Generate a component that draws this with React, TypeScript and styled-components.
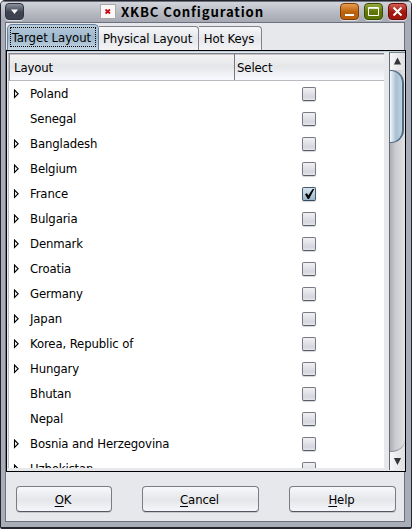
import React, { useState } from "react";
import styled, { createGlobalStyle, css } from "styled-components";

const GlobalStyle = createGlobalStyle`
  * { box-sizing: border-box; }
  body { margin: 0; overflow: hidden; background: #fff; }
  button { font: inherit; color: inherit; letter-spacing: inherit; }
`;

const Window = styled.div`
  width: 412px;
  height: 529px;
  display: flex;
  flex-direction: column;
  overflow: hidden;
  background: #a9adb8;
  border: 1px solid #24242e;
  border-width: 1px 1px 2px 1px;
  border-radius: 5px 5px 2px 2px;
  font: 13px/16px "DejaVu Sans Condensed", "DejaVu Sans", sans-serif;
  font-stretch: condensed;
  letter-spacing: -0.12px;
  color: #000;
`;

const TitleBar = styled.header`
  height: 21px;
  flex: none;
  display: flex;
  align-items: center;
  padding: 0 4px;
  background: linear-gradient(#d4d7de, #b7bac2 55%, #a5a8b2);
  box-shadow: inset 0 1px #6d6f79;
`;

const tones = {
  slate: ["#8b909c", "#3c424f", "#303540"],
  orange: ["#e89c51", "#bb610b", "#7d3f08"],
  green: ["#98aa40", "#5d7504", "#3d4d05"],
  red: ["#cf6055", "#a1160d", "#720b07"],
};

const TitleButton = styled.button<{ $tone: keyof typeof tones }>`
  width: 19px;
  height: 17px;
  margin-right: 5px;
  padding: 0;
  flex: none;
  border: 1px solid ${(p) => tones[p.$tone][2]};
  border-radius: 4px;
  background: linear-gradient(${(p) => tones[p.$tone][0]}, ${(p) => tones[p.$tone][1]} 55%);
  box-shadow: 0 1px #dadce2;
  svg { display: block; }
  &:last-child { margin-right: 0; }
`;

const AppIcon = styled.svg`
  flex: none;
  margin-left: 71px;
`;

const Title = styled.h1`
  flex: 1;
  margin: 0 0 0 5px;
  font: 700 13.2px/18px "Noto Sans CJK JP", sans-serif;
  letter-spacing: 0.85px;
  white-space: nowrap;
`;

const Body = styled.main`
  flex: 1;
  min-height: 0;
  margin: 0 6px 5px 4px;
  display: flex;
  flex-direction: column;
  background: #e7e8ec;
  border: 1px solid #6d717d;
`;

const TabList = styled.nav`
  width: 400px;
  height: 28px;
  flex: none;
  display: flex;
  align-items: flex-end;
  padding-left: 1px;
  border-bottom: 1px solid #000;
`;

const Tab = styled.button<{ $active: boolean; $width: number }>`
  width: ${(p) => p.$width}px;
  height: 24px;
  padding: 0 2px 0 0;
  border: 1px solid #80838b;
  border-left-width: 0;
  border-bottom: 0;
  border-radius: 0 4px 0 0;
  background: linear-gradient(#f6f7f9, #e6e7eb 50%, #f4f4f6);
  white-space: nowrap;
  text-align: center;
  ${(p) =>
    p.$active &&
    css`
      height: 26px;
      padding: 2px 2px 3px 2px;
      letter-spacing: 0;
      border-left-width: 1px;
      border-color: #69809a;
      border-radius: 5px 5px 0 0;
      background: linear-gradient(#b9cddd, #9cb6ca 50%, #c3d7e6);
    `}
`;

const TabLabel = styled.span<{ $focused: boolean }>`
  display: block;
  height: 20px;
  padding-right: ${(p) => (p.$focused ? 3 : 0)}px;
  line-height: ${(p) => (p.$focused ? 20 : 18)}px;
  border: 1px dotted ${(p) => (p.$focused ? "#000" : "transparent")};
`;

const Panel = styled.section`
  width: 400px;
  height: 421px;
  flex: none;
  display: flex;
  border: 1px solid #000;
  border-top: 0;
  background: #e7e8ec;
  padding: 1px 0 1px 1px;
  box-shadow: inset 0 1px #b9cedd;
`;

const Table = styled.div`
  width: 376px;
  height: 415px;
  margin-top: 1px;
  border-top: 1px solid #83828c;
  border-left: 1px solid #b7bac9;
  overflow: hidden;
  background: #fff;
`;

const HeaderRow = styled.div`
  height: 27px;
  display: flex;
  border-bottom: 1px solid #b9bac0;
  border-left: 1px solid #8d8e96;
  background: linear-gradient(#f4f4f5, #e5e6e8 48%, #f9faff);
  box-shadow: inset 0 1px #c3c4ca;
`;

const HeaderCell = styled.div<{ $width?: number }>`
  width: ${(p) => (p.$width ? `${p.$width}px` : "auto")};
  padding: 6px 0 0 ${(p) => (p.$width ? 4 : 2)}px;
  border-right: ${(p) => (p.$width ? "1px solid #777982" : "0")};
`;

const Row = styled.div`
  height: 25px;
  display: flex;
  align-items: center;
`;

const Expander = styled.svg`
  flex: none;
  margin: 0 9px 0 4px;
`;

const RowName = styled.span`
  width: 272px;
  flex: none;
  white-space: nowrap;
`;

const Check = styled.button<{ $on: boolean }>`
  width: 14px;
  height: 14px;
  margin: 1px 0 0;
  padding: 0;
  flex: none;
  border: 1px solid ${(p) => (p.$on ? "#44596d" : "#777984")};
  border-bottom-color: ${(p) => (p.$on ? "#374b60" : "#595d66")};
  border-radius: 2px;
  background: ${(p) => (p.$on ? "linear-gradient(#d5e3ee, #9db6c9)" : "linear-gradient(#f1f1f3, #d5d6de 75%, #e6e7ec)")};
  box-shadow: 0 1px 1px #d3d4da;
  svg { display: block; overflow: visible; }
`;

const ScrollBar = styled.div`
  width: 16px;
  height: 418px;
  margin-left: auto;
  display: flex;
  flex-direction: column;
  border-left: 1px solid #656871;
  background: linear-gradient(90deg, #f6f6f8, #dedfe4);
`;

const ScrollArrow = styled.button<{ $edge?: boolean }>`
  height: 18px;
  flex: none;
  padding: 0;
  border: 0;
  border-top: ${(p) => (p.$edge ? "1px solid #83868f" : "0")};
  background: transparent;
  svg { display: block; }
`;

const ScrollTrack = styled.div`
  flex: 1;
  border-bottom: 1px solid #85878f;
  border-radius: 0 0 14px 0 / 0 0 12px 0;
  background: linear-gradient(90deg, #aaadb3, #c9cbd0 35%, #e0e1e4);
`;

const ScrollThumb = styled.div`
  width: 14px;
  height: 73px;
  border: 1px solid #526b82;
  border-left: 0;
  border-right-width: 2px;
  border-radius: 0 13px 13px 0;
  background: linear-gradient(90deg, #f2f8fc, #a9c0d2 50%, #bed3e2);
`;

const Footer = styled.footer`
  display: flex;
  gap: 30px;
  padding: 14px 0 0 10px;
`;

const PushButton = styled.button<{ $width: number }>`
  width: ${(p) => p.$width}px;
  height: 26px;
  flex: none;
  padding: 0 2px 0 0;
  border: 1px solid #797c84;
  border-bottom-color: #53565e;
  border-radius: 4px;
  background: linear-gradient(#f7f8fa, #e5e6ea 55%, #f5f6fa);
  box-shadow: 0 1px #c6c8ce;
  line-height: 25px;
`;

const Mnemonic = styled.span`
  text-decoration: underline;
  text-underline-offset: 2px;
  text-decoration-thickness: 1px;
`;

const tabs = [
  { label: "Target Layout", width: 92 },
  { label: "Physical Layout", width: 100 },
  { label: "Hot Keys", width: 63 },
];

const countries = [
  ["Poland", true], ["Senegal", false], ["Bangladesh", true], ["Belgium", true],
  ["France", true], ["Bulgaria", true], ["Denmark", true], ["Croatia", true],
  ["Germany", true], ["Japan", true], ["Korea, Republic of", true], ["Hungary", true],
  ["Bhutan", false], ["Nepal", false], ["Bosnia and Herzegovina", true], ["Uzbekistan", true],
] as const;

const actions = [
  { label: "OK", width: 96 },
  { label: "Cancel", width: 117 },
  { label: "Help", width: 107 },
];

export default function App() {
  const [activeTab, setActiveTab] = useState("Target Layout");
  const [selected, setSelected] = useState("France");

  return (
    <Window>
      <GlobalStyle />
      <TitleBar>
        <TitleButton $tone="slate" aria-label="Window menu">
          <svg width="17" height="15"><path d="M5 5.5h7L8.5 10z" fill="#fff" /></svg>
        </TitleButton>
        <AppIcon width="16" height="15">
          <path d="M.5.5h15v14H.5z" fill="#f9f8f7" stroke="#aaa8a5" />
          <path d="M5.5 5.5l4.5 4M10 5.5l-4.5 4" stroke="#c90814" strokeWidth="1.7" />
        </AppIcon>
        <Title>XKBC Configuration</Title>
        <TitleButton $tone="orange" aria-label="Minimize">
          <svg width="17" height="15"><path d="M4 10h9v2H4z" fill="#fff" /></svg>
        </TitleButton>
        <TitleButton $tone="green" aria-label="Maximize">
          <svg width="17" height="15"><path d="M3.5 3.5h10v8h-10z" fill="none" stroke="#fff" /><path d="M4 4.5h9" stroke="#e4e7cf" /></svg>
        </TitleButton>
        <TitleButton $tone="red" aria-label="Close">
          <svg width="17" height="15"><path d="M4.5 3.5l8 8M12.5 3.5l-8 8" stroke="#fff" strokeWidth="2" /></svg>
        </TitleButton>
      </TitleBar>
      <Body>
        <TabList>
          {tabs.map((t) => (
            <Tab key={t.label} $width={t.width} $active={activeTab === t.label} onClick={() => setActiveTab(t.label)}>
              <TabLabel $focused={activeTab === t.label}>{t.label}</TabLabel>
            </Tab>
          ))}
        </TabList>
        <Panel>
          <Table>
            <HeaderRow>
              <HeaderCell $width={225}>Layout</HeaderCell>
              <HeaderCell>Select</HeaderCell>
            </HeaderRow>
            {countries.map(([name, expandable]) => (
              <Row key={name}>
                <Expander width="8" height="10">
                  {expandable && <path d="M1.5 1v7.5L5.2 4.75z" fill="#fff" stroke="#000" strokeWidth="1.1" />}
                </Expander>
                <RowName>{name}</RowName>
                <Check $on={selected === name} aria-label={`Select ${name}`} onClick={() => setSelected(name)}>
                  {selected === name && (
                    <svg width="12" height="12"><path d="M2 6.2l2-1 1.3 2.3L9.6 1h1.7L6 11H4.8z" fill="#000" /></svg>
                  )}
                </Check>
              </Row>
            ))}
          </Table>
          <ScrollBar>
            <ScrollArrow $edge aria-label="Scroll up">
              <svg width="15" height="16"><path d="M7.5 3.5l3.6 7H3.9z" fill="#33353a" /></svg>
            </ScrollArrow>
            <ScrollTrack><ScrollThumb /></ScrollTrack>
            <ScrollArrow aria-label="Scroll down">
              <svg width="15" height="16"><path d="M7.5 12L3.9 5h7.2z" fill="#33353a" /></svg>
            </ScrollArrow>
          </ScrollBar>
        </Panel>
        <Footer>
          {actions.map((a) => (
            <PushButton key={a.label} $width={a.width}>
              <Mnemonic>{a.label[0]}</Mnemonic>{a.label.slice(1)}
            </PushButton>
          ))}
        </Footer>
      </Body>
    </Window>
  );
}
